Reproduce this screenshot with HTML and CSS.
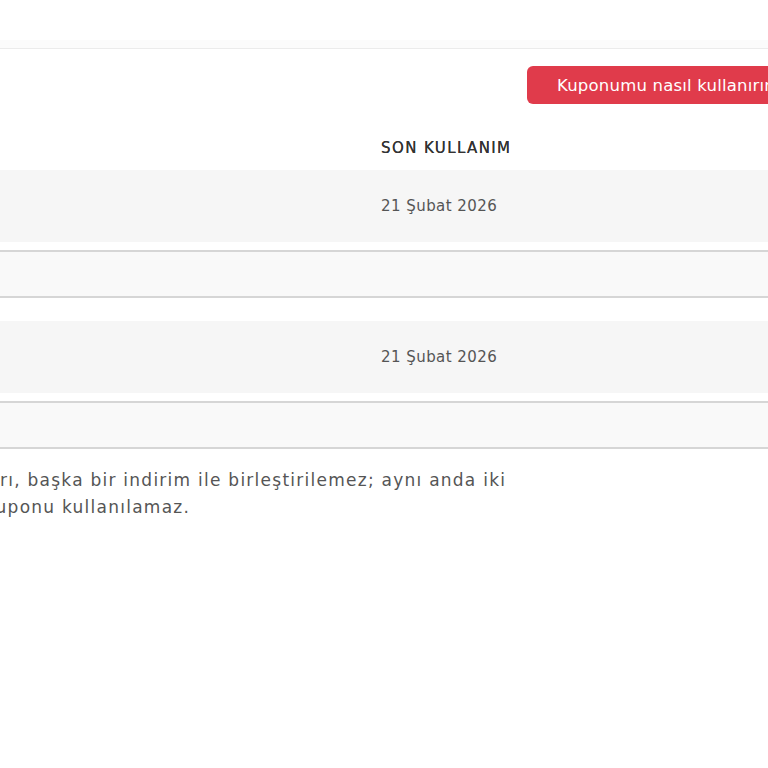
FILE: index.html
```html
<!DOCTYPE html>
<html lang="tr">
<head>
<meta charset="utf-8">
<link rel="stylesheet" href="styles.css">
</head>
<body>
<div class="page">
  <header class="topbar"></header>
  <div class="toolbar">
    <button class="btn-help">Kuponumu nasıl kullanırım?</button>
  </div>
  <div class="table">
    <div class="thead">
      <div class="cell"></div>
      <div class="cell th">SON KULLANIM</div>
    </div>
    <div class="group">
      <div class="row-main">
        <div class="cell"></div>
        <div class="cell td">21 Şubat 2026</div>
      </div>
      <div class="row-detail"></div>
    </div>
    <div class="group">
      <div class="row-main">
        <div class="cell"></div>
        <div class="cell td">21 Şubat 2026</div>
      </div>
      <div class="row-detail"></div>
    </div>
  </div>
  <p class="note">rı, başka bir indirim ile birleştirilemez; aynı anda iki<br><span class="cut">kuponu kullanılamaz.</span></p>
</div>
</body>
</html>
```
FILE: styles.css
```css
html, body {
  margin: 0;
  padding: 0;
  background: #ffffff;
  overflow: hidden;
}
.page {
  width: 768px;
  overflow: hidden;
  font-family: "DejaVu Sans", "Liberation Sans", sans-serif;
  color: #444;
}
.topbar {
  height: 40px;
  border-bottom: 8px solid #fbfbfb;
  box-shadow: 0 1px 0 #ebebeb;
  margin-bottom: 1px;
}
.toolbar {
  display: flex;
  padding: 17px 0 0 527px;
  white-space: nowrap;
}
.btn-help {
  flex: none;
  height: 38px;
  padding: 0 30px;
  border: none;
  border-radius: 6px;
  background: #e03b4b;
  color: #fff;
  font-family: "DejaVu Sans", sans-serif;
  font-size: 16.5px;
  letter-spacing: 0.2px;
  white-space: nowrap;
}
.table {
  margin-top: 21px;
}
.thead, .row-main {
  display: grid;
  grid-template-columns: 381px 1fr;
  align-items: center;
}
.thead {
  height: 45px;
}
.th {
  font-size: 15px;
  font-weight: normal;
  color: #333;
  letter-spacing: 1.4px;
  text-shadow: 0 0 0.4px #333;
}
.row-main {
  height: 72px;
  background: #f6f6f6;
}
.td {
  font-size: 15px;
  letter-spacing: 0.45px;
  color: #555;
}
.row-detail {
  margin-top: 8px;
  height: 44px;
  background: #f9f9f9;
  border-top: 2px solid #d6d6d6;
  border-bottom: 2px solid #d6d6d6;
}
.group + .group {
  margin-top: 23px;
}
.note {
  margin: 18px 0 0;
  font-size: 17px;
  letter-spacing: 1.25px;
  line-height: 27px;
  color: #555;
  white-space: nowrap;
}
.cut {
  display: inline-block;
  margin-left: -15px;
}
```
